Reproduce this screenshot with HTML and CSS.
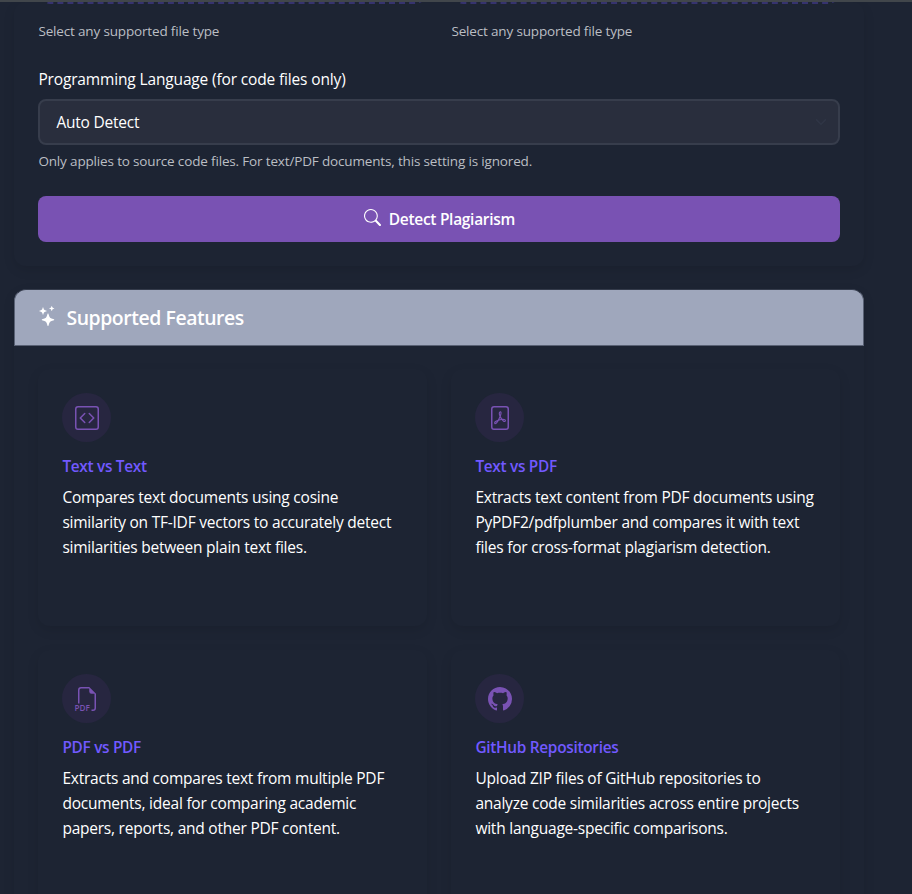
FILE: index.html
```html
<!DOCTYPE html>
<html lang="en">
<head>
<meta charset="utf-8">
<title>Plagiarism Detector</title>
<link rel="stylesheet" href="styles.css">
</head>
<body>
<div class="topline"></div>
<main class="page">
  <section class="card upload">
    <div class="columns">
      <div><div class="dropzone"></div><p class="hint t-select">Select any supported file type</p></div>
      <div><div class="dropzone"></div><p class="hint t-select">Select any supported file type</p></div>
    </div>
    <div class="label">Programming Language (for code files only)</div>
    <div class="select"><span>Auto Detect</span>
      <svg width="16" height="12" viewBox="0 0 16 16" fill="none" stroke="#303646" stroke-width="2" stroke-linecap="round" stroke-linejoin="round"><path d="m2 5 6 6 6-6"/></svg>
    </div>
    <p class="hint note">Only applies to source code files. For text/PDF documents, this setting is ignored.</p>
    <button class="detect" type="button">
      <svg width="17" height="17" viewBox="0 0 16 16" fill="currentColor"><path d="M11.742 10.344a6.5 6.5 0 1 0-1.397 1.398h-.001q.044.06.098.115l3.85 3.85a1 1 0 0 0 1.415-1.414l-3.85-3.85a1 1 0 0 0-.115-.1zM12 6.5a5.5 5.5 0 1 1-11 0 5.5 5.5 0 0 1 11 0"/></svg>
      <span>Detect Plagiarism</span>
    </button>
  </section>

  <section class="card features">
    <header class="head">
      <svg width="20" height="20" viewBox="0 0 16 16" fill="currentColor"><path d="M7.657 6.247c.11-.33.576-.33.686 0l.645 1.937a2.89 2.89 0 0 0 1.829 1.828l1.936.645c.33.11.33.576 0 .686l-1.937.645a2.89 2.89 0 0 0-1.828 1.829l-.645 1.936a.361.361 0 0 1-.686 0l-.645-1.937a2.89 2.89 0 0 0-1.828-1.828l-1.937-.645a.361.361 0 0 1 0-.686l1.937-.645a2.89 2.89 0 0 0 1.828-1.828zM3.794 1.148a.217.217 0 0 1 .412 0l.387 1.162c.173.518.579.924 1.097 1.097l1.162.387a.217.217 0 0 1 0 .412l-1.162.387A1.73 1.73 0 0 0 4.593 5.69l-.387 1.162a.217.217 0 0 1-.412 0L3.407 5.69A1.73 1.73 0 0 0 2.31 4.593l-1.162-.387a.217.217 0 0 1 0-.412l1.162-.387A1.73 1.73 0 0 0 3.407 2.31zM10.863.099a.145.145 0 0 1 .274 0l.258.774c.115.346.386.617.732.732l.774.258a.145.145 0 0 1 0 .274l-.774.258a1.16 1.16 0 0 0-.732.732l-.258.774a.145.145 0 0 1-.274 0l-.258-.774a1.16 1.16 0 0 0-.732-.732L9.1 2.137a.145.145 0 0 1 0-.274l.774-.258c.346-.115.617-.386.732-.732z"/></svg>
      <h2>Supported Features</h2>
    </header>
    <div class="grid">
      <article class="feature">
        <div class="icon"><svg viewBox="0 0 16 16" fill="currentColor"><path d="M14 1a1 1 0 0 1 1 1v12a1 1 0 0 1-1 1H2a1 1 0 0 1-1-1V2a1 1 0 0 1 1-1zM2 0a2 2 0 0 0-2 2v12a2 2 0 0 0 2 2h12a2 2 0 0 0 2-2V2a2 2 0 0 0-2-2z"/><path d="M6.854 4.646a.5.5 0 0 1 0 .708L4.207 8l2.647 2.646a.5.5 0 0 1-.708.708l-3-3a.5.5 0 0 1 0-.708l3-3a.5.5 0 0 1 .708 0m2.292 0a.5.5 0 0 0 0 .708L11.793 8l-2.647 2.646a.5.5 0 0 0 .708.708l3-3a.5.5 0 0 0 0-.708l-3-3a.5.5 0 0 0-.708 0"/></svg></div>
        <h3>Text vs Text</h3>
        <p>Compares text documents using cosine<br>similarity on TF-IDF vectors to accurately detect<br>similarities between plain text files.</p>
      </article>
      <article class="feature">
        <div class="icon"><svg viewBox="0 0 16 16" fill="currentColor"><path d="M4 0a2 2 0 0 0-2 2v12a2 2 0 0 0 2 2h8a2 2 0 0 0 2-2V2a2 2 0 0 0-2-2zm0 1h8a1 1 0 0 1 1 1v12a1 1 0 0 1-1 1H4a1 1 0 0 1-1-1V2a1 1 0 0 1 1-1"/><path d="M4.603 12.087a.8.8 0 0 1-.438-.42c-.195-.388-.13-.776.08-1.102.198-.307.526-.568.897-.787a7.7 7.7 0 0 1 1.482-.645 20 20 0 0 0 1.062-2.227 7.3 7.3 0 0 1-.43-1.295c-.086-.4-.119-.796-.046-1.136.075-.354.274-.672.65-.823.192-.077.4-.12.602-.077a.7.7 0 0 1 .477.365c.088.164.12.356.127.538.007.187-.012.395-.047.614-.084.51-.27 1.134-.52 1.794a11 11 0 0 0 .98 1.686 5.8 5.8 0 0 1 1.334.05c.364.065.734.195.96.465.12.144.193.32.2.518.007.192-.047.382-.138.563a1.04 1.04 0 0 1-.354.416.86.86 0 0 1-.51.138c-.331-.014-.654-.196-.933-.417a5.7 5.7 0 0 1-.911-.95 11.6 11.6 0 0 0-1.997.406 11.3 11.3 0 0 1-1.021 1.51c-.29.35-.608.655-.926.787a.8.8 0 0 1-.58.029m1.379-1.901q-.25.115-.459.238c-.328.194-.541.383-.647.547-.094.145-.096.25-.04.361q.016.032.026.044l.035-.012c.137-.056.355-.235.635-.572a8 8 0 0 0 .45-.606m1.64-1.33a13 13 0 0 1 1.01-.193 12 12 0 0 1-.51-.858 21 21 0 0 1-.5 1.05zm2.446.45q.226.244.435.41c.24.19.407.253.498.256a.1.1 0 0 0 .07-.015.3.3 0 0 0 .094-.125.44.44 0 0 0 .059-.2.1.1 0 0 0-.026-.063c-.052-.062-.2-.152-.518-.209a4 4 0 0 0-.612-.053zM8.078 5.8a7 7 0 0 0 .2-.828q.046-.282.038-.465a.6.6 0 0 0-.032-.198.5.5 0 0 0-.145.04c-.087.035-.158.106-.196.283-.04.192-.03.469.046.822q.036.167.09.346z"/></svg></div>
        <h3>Text vs PDF</h3>
        <p>Extracts text content from PDF documents using<br>PyPDF2/pdfplumber and compares it with text<br>files for cross-format plagiarism detection.</p>
      </article>
      <article class="feature">
        <div class="icon"><svg viewBox="0 0 16 16" fill="currentColor"><path d="M14 4.5V14a2 2 0 0 1-2 2h-1v-1h1a1 1 0 0 0 1-1V4.5h-2A1.5 1.5 0 0 1 9.5 3V1H4a1 1 0 0 0-1 1v9H2V2a2 2 0 0 1 2-2h5.5z"/><text class="pdf-tag" x="-.3" y="15.8" textLength="10.2" lengthAdjust="spacingAndGlyphs">PDF</text></svg></div>
        <h3>PDF vs PDF</h3>
        <p>Extracts and compares text from multiple PDF<br>documents, ideal for comparing academic<br>papers, reports, and other PDF content.</p>
      </article>
      <article class="feature">
        <div class="icon"><svg viewBox="0 0 16 16" fill="currentColor"><path d="M8 0C3.58 0 0 3.58 0 8c0 3.54 2.29 6.53 5.47 7.59.4.07.55-.17.55-.38 0-.19-.01-.82-.01-1.49-2.01.37-2.53-.49-2.69-.94-.09-.23-.48-.94-.82-1.13-.28-.15-.68-.52-.01-.53.63-.01 1.08.58 1.23.82.72 1.21 1.87.87 2.33.66.07-.52.28-.87.51-1.07-1.78-.2-3.64-.89-3.64-3.95 0-.87.31-1.59.82-2.15-.08-.2-.36-1.02.08-2.12 0 0 .67-.21 2.2.82.64-.18 1.32-.27 2-.27s1.36.09 2 .27c1.53-1.04 2.2-.82 2.2-.82.44 1.1.16 1.92.08 2.12.51.56.82 1.27.82 2.15 0 3.07-1.87 3.75-3.65 3.95.29.25.54.73.54 1.48 0 1.07-.01 1.93-.01 2.2 0 .21.15.46.55.38A8.01 8.01 0 0 0 16 8c0-4.42-3.58-8-8-8"/></svg></div>
        <h3>GitHub Repositories</h3>
        <p>Upload ZIP files of GitHub repositories to<br>analyze code similarities across entire projects<br>with language-specific comparisons.</p>
      </article>
    </div>
  </section>
</main>
</body>
</html>
```
FILE: styles.css
```css
* { box-sizing: border-box; }
html, body { height: 100%; overflow: hidden; }
body { margin: 0; background: #1d2433; color: #fff; font: 15.5px/25px "Open Sans", "Noto Sans", sans-serif; letter-spacing: -.23px; }
h2, h3, p { margin: 0; }
svg { display: block; flex: none; }
.topline { height: 2px; background: #41464b; }
.page { height: 892px; overflow: hidden; padding-left: 14.4px; }
.card { width: 850px; border-radius: 12px; box-shadow: 0 4px 12px rgba(0, 0, 0, .1); }
.upload { height: 264px; padding: 0 24px; }
.columns { display: grid; grid-template-columns: 1fr 1fr; gap: 24px; }
.dropzone { height: 26px; margin-top: -24px; border: 2px dashed #36336f; border-top: 0; border-radius: 12px; }
.hint { color: #bbbec3; font-size: 13.5px; line-height: 20px; letter-spacing: -.16px; white-space: nowrap; }
.t-select { margin-top: 17px; }
.label { margin-top: 26px; line-height: 24px; letter-spacing: -.15px; white-space: nowrap; }
.select { display: flex; align-items: center; justify-content: space-between; height: 46px; margin-top: 8px; padding: 0 9px 0 16px; border: 2px solid #373d4c; border-radius: 8px; background: #292e3d; }
.note { margin-top: 6px; }
.detect { display: flex; align-items: center; justify-content: center; gap: 8px; width: 802px; height: 46px; margin-top: 25px; padding: 0; border: 0; border-radius: 8px; background: #7952b3; color: #fff; font: 600 15.5px/24px "Open Sans", sans-serif; letter-spacing: -.3px; }
.detect svg { margin-top: -3px; }
.features { height: 700px; margin-top: 23px; }
.head { display: flex; align-items: center; gap: 8px; height: 57px; padding: 0 24px 0 23px; border: 1px solid #596174; border-top-color: #343b4b; border-radius: 12px 12px 0 0; background: #9fa7bc; }
.head svg { margin-top: -3px; }
.head h2 { font-size: 19.4px; font-weight: 600; line-height: 24px; letter-spacing: -.42px; }
.grid { display: grid; grid-template-columns: 389px 389px; grid-auto-rows: 257px; gap: 24px; padding: 23px 24px; }
.feature { padding: 24px 24px 0; border-radius: 12px; box-shadow: 0 4px 12px rgba(0, 0, 0, .1); white-space: nowrap; }
.icon { display: flex; align-items: center; justify-content: center; width: 49px; height: 49px; margin-bottom: 15px; border-radius: 50%; background: #272640; color: #7952b3; }
.icon svg { width: 24px; height: 24px; overflow: visible; }
.pdf-tag { font: 600 5.5px "Open Sans", sans-serif; letter-spacing: 0; }
.feature h3 { color: #7159ff; font-size: 15.4px; font-weight: 600; line-height: 19px; margin-bottom: 9px; letter-spacing: -.3px; }
```
